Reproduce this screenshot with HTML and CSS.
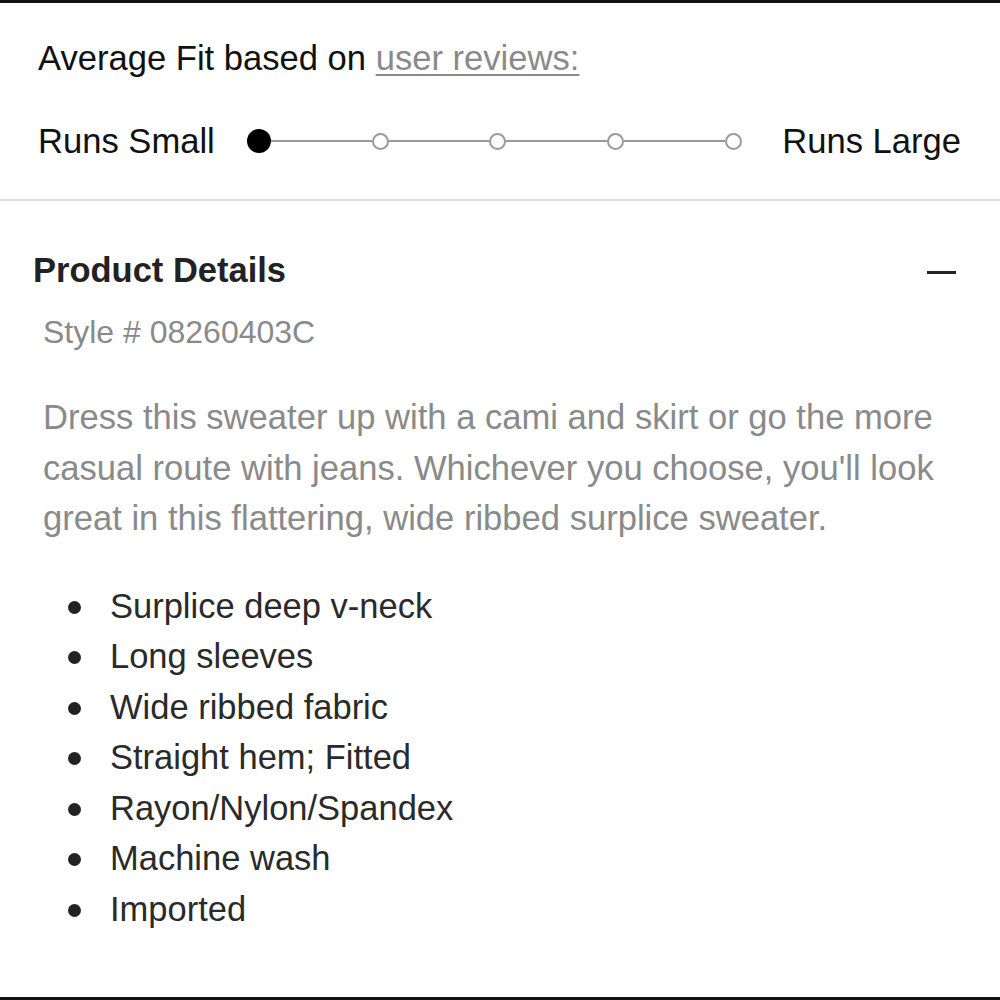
FILE: index.html
```html
<!DOCTYPE html>
<html lang="en">
<head>
<meta charset="utf-8">
<title>Product Details</title>
<link rel="stylesheet" href="styles.css">
</head>
<body>
<div class="frame">
  <section class="fit">
    <p class="fit-title">Average Fit based on <a class="fit-link" href="#">user reviews:</a></p>
    <div class="fit-row">
      <span class="fit-label">Runs Small</span>
      <div class="scale">
        <span class="dot dot-active"></span>
        <span class="seg"></span>
        <span class="dot"></span>
        <span class="seg"></span>
        <span class="dot"></span>
        <span class="seg"></span>
        <span class="dot"></span>
        <span class="seg"></span>
        <span class="dot"></span>
      </div>
      <span class="fit-label fit-label-end">Runs Large</span>
    </div>
  </section>
  <section class="details">
    <div class="details-head">
      <h2 class="details-title">Product Details</h2>
      <span class="collapse" aria-label="collapse"></span>
    </div>
    <p class="style-no">Style # 08260403C</p>
    <p class="desc">Dress this sweater up with a cami and skirt or go the more casual route with jeans. Whichever you choose, you'll look great in this flattering, wide ribbed surplice sweater.</p>
    <ul class="features">
      <li>Surplice deep v-neck</li>
      <li>Long sleeves</li>
      <li>Wide ribbed fabric</li>
      <li>Straight hem; Fitted</li>
      <li>Rayon/Nylon/Spandex</li>
      <li>Machine wash</li>
      <li>Imported</li>
    </ul>
  </section>
</div>
</body>
</html>
```
FILE: styles.css
```css
* { box-sizing: border-box; }
html, body {
  margin: 0;
  padding: 0;
  background: #fff;
}
body {
  font-family: "Liberation Sans", Arial, Helvetica, sans-serif;
  color: #111;
}
.frame {
  width: 1000px;
  height: 1000px;
  border-top: 3px solid #111;
  border-bottom: 3px solid #111;
  overflow: hidden;
}
.fit {
  padding: 35px 39px 38px 38px;
  border-bottom: 2px solid #dcdcdc;
}
.fit-title {
  margin: 0;
  font-size: 34.6px;
  line-height: 40px;
  color: #111;
}
.fit-link {
  color: #8a8a8a;
  text-decoration: underline;
  text-decoration-thickness: 2px;
  text-underline-offset: 4px;
}
.fit-row {
  margin-top: 43px;
  height: 40px;
  display: flex;
  align-items: center;
}
.fit-label {
  font-size: 34.6px;
  line-height: 40px;
  color: #111;
}
.fit-label-end {
  margin-left: auto;
}
.scale {
  display: flex;
  align-items: center;
  width: 495px;
  margin-left: 32px;
}
.seg {
  flex: 1;
  height: 2px;
  background: #9a9a9a;
}
.dot {
  width: 17px;
  height: 17px;
  border: 2px solid #9a9a9a;
  border-radius: 50%;
  background: #fff;
  flex: none;
}
.dot-active {
  width: 24px;
  height: 24px;
  border: none;
  background: #000;
}
.details {
  padding: 49px 44px 0 33px;
}
.details-head {
  display: flex;
  align-items: center;
  justify-content: space-between;
  height: 40px;
}
.details-title {
  margin: 0;
  font-size: 34.5px;
  line-height: 40px;
  font-weight: 700;
  color: #222;
}
.collapse {
  width: 29px;
  height: 3px;
  background: #222;
  margin-top: 4px;
}
.style-no {
  margin: 22px 0 0 10px;
  font-size: 32px;
  line-height: 40px;
  color: #8a8a8a;
}
.desc {
  margin: 40px 0 0 10px;
  font-size: 34.6px;
  line-height: 50.5px;
  color: #8a8a8a;
}
.features {
  list-style: none;
  margin: 37px 0 0 0;
  padding: 0 0 0 77px;
}
.features li {
  position: relative;
  font-size: 34.5px;
  line-height: 50.5px;
  color: #2a2a2a;
}
.features li::before {
  content: "";
  position: absolute;
  left: -42px;
  top: 20px;
  width: 13px;
  height: 13px;
  border-radius: 50%;
  background: #222;
}
```
